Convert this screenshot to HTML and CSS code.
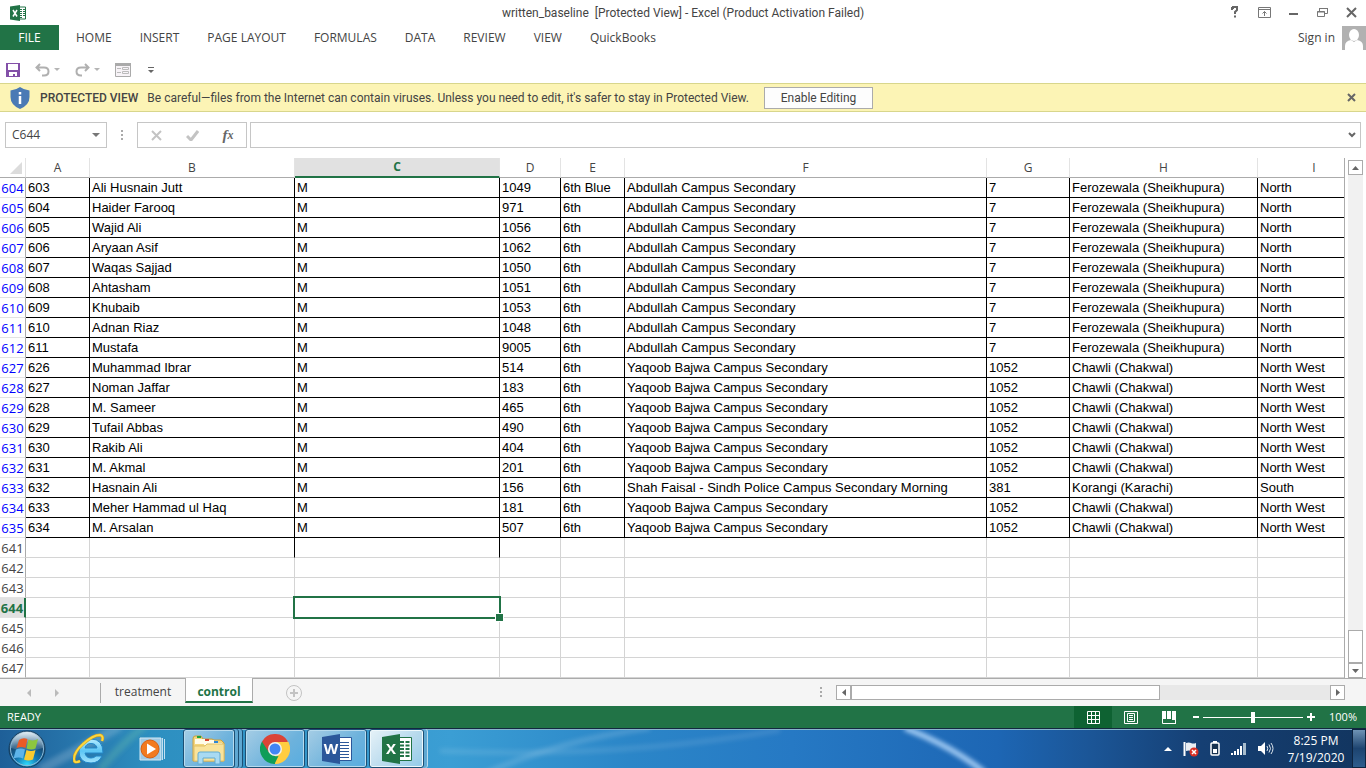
FILE: index.html
```html
<!DOCTYPE html>
<html lang="en">
<head>
    <meta charset="UTF-8">
    <meta name="viewport" content="width=device-width, initial-scale=1.0">
    <title>written_baseline [Protected View] - Excel</title>
    <link rel="stylesheet" href="styles.css">
</head>
<body>
    <!-- Title bar -->
    <header class="titlebar">
        <svg class="app-icon" width="16" height="16" viewBox="0 0 16 16">
            <path d="M9 2h6.500v12H9z" fill="#fff" stroke="#217346"/>
            <path d="M10 4.500h2M13 4.500h2M10 6.500h2M13 6.500h2M10 8.500h2M13 8.500h2M10 10.500h2M13 10.500h2M10 12.500h2" stroke="#217346"/>
            <path d="M0 1.500L10 0v16L0 14.500z" fill="#217346"/>
            <path d="M3 5l4 6.500M7 5l-4 6.500" stroke="#fff" stroke-width="1.500"/>
        </svg>
        <h1>written_baseline&nbsp; [Protected View] - Excel (Product Activation Failed)</h1>
        <div class="window-buttons">
            <button type="button" aria-label="Help">
                <svg width="13" height="13" viewBox="0 0 13 13"><path d="M3 4V2h1V1h4v3L6 6V8M6 9.500v2" fill="none" stroke="#666" stroke-width="2"/></svg>
            </button>
            <button type="button" aria-label="Ribbon display options">
                <svg width="13" height="11" viewBox="0 0 13 11"><path d="M.5.5h12v10H.5zM.5 2.500h12M6.500 9V4.500M4.500 6.500l2-2 2 2" fill="none" stroke="#777"/></svg>
            </button>
            <button type="button" aria-label="Minimize">
                <svg width="10" height="11" viewBox="0 0 10 11"><path d="M0 7h9" stroke="#666" stroke-width="2"/></svg>
            </button>
            <button type="button" aria-label="Restore">
                <svg width="11" height="11" viewBox="0 0 11 11"><path d="M.5 4.500h7v5h-7zM0 5h8M2.500 4V1.500h8v5H8M2 1.500h9" fill="none" stroke="#777"/></svg>
            </button>
            <button type="button" aria-label="Close">
                <svg width="11" height="11" viewBox="0 0 11 11"><path d="M1 1l9 9M10 1l-9 9" stroke="#666" stroke-width="2"/></svg>
            </button>
        </div>
    </header>

    <!-- Ribbon tabs -->
    <nav class="ribbon">
        <a class="file-tab" href="#">FILE</a>
        <a href="#">HOME</a>
        <a href="#">INSERT</a>
        <a href="#">PAGE LAYOUT</a>
        <a href="#">FORMULAS</a>
        <a href="#">DATA</a>
        <a href="#">REVIEW</a>
        <a href="#">VIEW</a>
        <a href="#">QuickBooks</a>
        <a class="sign-in" href="#">Sign in
            <svg width="24" height="24" viewBox="0 0 24 24"><path d="M0 0h24v24H0z" fill="#b1b1b1"/><ellipse cx="12" cy="9" rx="5" ry="6" fill="#fff"/><path d="M3 24v-4q0-5 6-6l3 2 3-2q6 1 6 6v4z" fill="#fff"/></svg>
        </a>
    </nav>

    <!-- Quick access toolbar -->
    <div class="quick-access">
        <button type="button" aria-label="Save">
            <svg width="14" height="14" viewBox="0 0 14 14"><path d="M0 0h14v14H0z" fill="#8350a8"/><path d="M2 1h10v6H2zM3 9h8v4H9v-2H7v2H3z" fill="#fff"/></svg>
        </button>
        <button type="button" class="undo" aria-label="Undo">
            <svg width="15" height="14" viewBox="0 0 15 14"><path d="M5 1L1.500 4.500 5 8M2 4.500h7q4.500 0 4.500 4T9 12.500H7" fill="none" stroke="#b0b0b0" stroke-width="2"/></svg>
            <svg width="6" height="4" viewBox="0 0 6 4"><path d="M0 0h6L3 3z" fill="#b5b5b5"/></svg>
        </button>
        <button type="button" class="redo" aria-label="Redo">
            <svg width="15" height="14" viewBox="0 0 15 14"><path d="M10 1l3.500 3.500L10 8M13 4.500H6q-4.500 0-4.500 4T6 12.500h1" fill="none" stroke="#b0b0b0" stroke-width="2"/></svg>
            <svg width="6" height="4" viewBox="0 0 6 4"><path d="M0 0h6L3 3z" fill="#b5b5b5"/></svg>
        </button>
        <button type="button" class="form" aria-label="Form">
            <svg width="16" height="14" viewBox="0 0 16 14"><path d="M.5.500h15v13H.5z" fill="#f7f3f7" stroke="#aaa"/><path d="M0 0h16v3H0z" fill="#aaa"/><path d="M2 5.500h4M2 9.500h4M7.500 4.500h6v2h-6zM7.500 8.500h6v2h-6z" fill="none" stroke="#bbb"/></svg>
        </button>
        <button type="button" class="more" aria-label="Customize Quick Access Toolbar">
            <svg width="6" height="7" viewBox="0 0 6 7"><path d="M0 .5h6" stroke="#666"/><path d="M0 3h6L3 6z" fill="#666"/></svg>
        </button>
    </div>

    <!-- Protected view message -->
    <div class="message-bar">
        <svg width="20" height="22" viewBox="0 0 20 22"><path d="M10 0q4 3 9.500 3.500V10q0 8-9.500 12Q.5 18 .5 10V3.500Q6 3 10 0z" fill="#4a7ab5"/><path d="M10 5v2.500M10 9v8" stroke="#fff" stroke-width="2.500"/></svg>
        <strong>PROTECTED VIEW</strong>
        <span class="message">Be careful—files from the Internet can contain viruses. Unless you need to edit, it's safer to stay in Protected View.</span>
        <button type="button" class="enable">Enable Editing</button>
        <button type="button" class="dismiss" aria-label="Close message">
            <svg width="9" height="9" viewBox="0 0 9 9"><path d="M1 1l7 7M8 1L1 8" stroke="#666" stroke-width="2"/></svg>
        </button>
    </div>

    <!-- Formula bar -->
    <div class="formula-bar">
        <div class="name-box">
            <input type="text" value="C644" aria-label="Name Box">
            <button type="button" aria-label="Names"><svg width="8" height="5" viewBox="0 0 8 5"><path d="M0 0h8L4 4z" fill="#777"/></svg></button>
        </div>
        <svg class="dots" width="2" height="11" viewBox="0 0 2 11"><path d="M0 0h2v2H0zM0 4h2v2H0zM0 8h2v2H0z" fill="#aaa"/></svg>
        <div class="formula-buttons">
            <button type="button" aria-label="Cancel"><svg width="11" height="11" viewBox="0 0 11 11"><path d="M1 1l9 9M10 1l-9 9" stroke="#c3c3c3" stroke-width="2"/></svg></button>
            <button type="button" aria-label="Enter"><svg width="13" height="11" viewBox="0 0 13 11"><path d="M1 6l4 4 7-9" fill="none" stroke="#c3c3c3" stroke-width="3"/></svg></button>
            <button type="button" class="fx" aria-label="Insert Function"><i>f</i><sub>x</sub></button>
        </div>
        <div class="formula-input">
            <input type="text" aria-label="Formula">
            <button type="button" aria-label="Expand formula bar"><svg width="8" height="6" viewBox="0 0 8 6"><path d="M1 1l3 3 3-3" fill="none" stroke="#666" stroke-width="2"/></svg></button>
        </div>
    </div>

    <!-- Worksheet -->
    <main class="worksheet">
        <div class="grid">
            <table>
                <colgroup>
                    <col class="col-head"><col class="col-a"><col class="col-b"><col class="col-c"><col class="col-d">
                    <col class="col-e"><col class="col-f"><col class="col-g"><col class="col-h"><col class="col-i">
                </colgroup>
                <thead>
                    <tr>
                        <th class="corner"><svg width="12" height="12" viewBox="0 0 12 12"><path d="M12 0v12H0z" fill="#dcdcdc"/></svg></th>
                        <th>A</th><th>B</th><th class="current">C</th><th>D</th><th>E</th><th>F</th><th>G</th><th>H</th><th>I</th>
                    </tr>
                </thead>
                <tbody class="data">
                    <tr><th>604</th><td>603</td><td>Ali Husnain Jutt</td><td>M</td><td>1049</td><td>6th Blue</td><td>Abdullah Campus Secondary</td><td>7</td><td>Ferozewala (Sheikhupura)</td><td>North</td></tr>
                    <tr><th>605</th><td>604</td><td>Haider Farooq</td><td>M</td><td>971</td><td>6th</td><td>Abdullah Campus Secondary</td><td>7</td><td>Ferozewala (Sheikhupura)</td><td>North</td></tr>
                    <tr><th>606</th><td>605</td><td>Wajid Ali</td><td>M</td><td>1056</td><td>6th</td><td>Abdullah Campus Secondary</td><td>7</td><td>Ferozewala (Sheikhupura)</td><td>North</td></tr>
                    <tr><th>607</th><td>606</td><td>Aryaan Asif</td><td>M</td><td>1062</td><td>6th</td><td>Abdullah Campus Secondary</td><td>7</td><td>Ferozewala (Sheikhupura)</td><td>North</td></tr>
                    <tr><th>608</th><td>607</td><td>Waqas Sajjad</td><td>M</td><td>1050</td><td>6th</td><td>Abdullah Campus Secondary</td><td>7</td><td>Ferozewala (Sheikhupura)</td><td>North</td></tr>
                    <tr><th>609</th><td>608</td><td>Ahtasham</td><td>M</td><td>1051</td><td>6th</td><td>Abdullah Campus Secondary</td><td>7</td><td>Ferozewala (Sheikhupura)</td><td>North</td></tr>
                    <tr><th>610</th><td>609</td><td>Khubaib</td><td>M</td><td>1053</td><td>6th</td><td>Abdullah Campus Secondary</td><td>7</td><td>Ferozewala (Sheikhupura)</td><td>North</td></tr>
                    <tr><th>611</th><td>610</td><td>Adnan Riaz</td><td>M</td><td>1048</td><td>6th</td><td>Abdullah Campus Secondary</td><td>7</td><td>Ferozewala (Sheikhupura)</td><td>North</td></tr>
                    <tr><th>612</th><td>611</td><td>Mustafa</td><td>M</td><td>9005</td><td>6th</td><td>Abdullah Campus Secondary</td><td>7</td><td>Ferozewala (Sheikhupura)</td><td>North</td></tr>
                    <tr><th>627</th><td>626</td><td>Muhammad Ibrar</td><td>M</td><td>514</td><td>6th</td><td>Yaqoob Bajwa Campus Secondary</td><td>1052</td><td>Chawli (Chakwal)</td><td>North West</td></tr>
                    <tr><th>628</th><td>627</td><td>Noman Jaffar</td><td>M</td><td>183</td><td>6th</td><td>Yaqoob Bajwa Campus Secondary</td><td>1052</td><td>Chawli (Chakwal)</td><td>North West</td></tr>
                    <tr><th>629</th><td>628</td><td>M. Sameer</td><td>M</td><td>465</td><td>6th</td><td>Yaqoob Bajwa Campus Secondary</td><td>1052</td><td>Chawli (Chakwal)</td><td>North West</td></tr>
                    <tr><th>630</th><td>629</td><td>Tufail Abbas</td><td>M</td><td>490</td><td>6th</td><td>Yaqoob Bajwa Campus Secondary</td><td>1052</td><td>Chawli (Chakwal)</td><td>North West</td></tr>
                    <tr><th>631</th><td>630</td><td>Rakib Ali</td><td>M</td><td>404</td><td>6th</td><td>Yaqoob Bajwa Campus Secondary</td><td>1052</td><td>Chawli (Chakwal)</td><td>North West</td></tr>
                    <tr><th>632</th><td>631</td><td>M. Akmal</td><td>M</td><td>201</td><td>6th</td><td>Yaqoob Bajwa Campus Secondary</td><td>1052</td><td>Chawli (Chakwal)</td><td>North West</td></tr>
                    <tr><th>633</th><td>632</td><td>Hasnain Ali</td><td>M</td><td>156</td><td>6th</td><td>Shah Faisal - Sindh Police Campus Secondary Morning</td><td>381</td><td>Korangi (Karachi)</td><td>South</td></tr>
                    <tr><th>634</th><td>633</td><td>Meher Hammad ul Haq</td><td>M</td><td>181</td><td>6th</td><td>Yaqoob Bajwa Campus Secondary</td><td>1052</td><td>Chawli (Chakwal)</td><td>North West</td></tr>
                    <tr><th>635</th><td>634</td><td>M. Arsalan</td><td>M</td><td>507</td><td>6th</td><td>Yaqoob Bajwa Campus Secondary</td><td>1052</td><td>Chawli (Chakwal)</td><td>North West</td></tr>
                </tbody>
                <tbody>
                    <tr><th>641</th><td></td><td class="edge"></td><td class="edge"></td><td></td><td></td><td></td><td></td><td></td><td></td></tr>
                    <tr><th>642</th><td></td><td></td><td></td><td></td><td></td><td></td><td></td><td></td><td></td></tr>
                    <tr><th>643</th><td></td><td></td><td></td><td></td><td></td><td></td><td></td><td></td><td></td></tr>
                    <tr><th class="current">644</th><td></td><td></td><td class="selected"></td><td></td><td></td><td></td><td></td><td></td><td></td></tr>
                    <tr><th>645</th><td></td><td></td><td></td><td></td><td></td><td></td><td></td><td></td><td></td></tr>
                    <tr><th>646</th><td></td><td></td><td></td><td></td><td></td><td></td><td></td><td></td><td></td></tr>
                    <tr><th>647</th><td></td><td></td><td></td><td></td><td></td><td></td><td></td><td></td><td></td></tr>
                </tbody>
            </table>
        </div>
        <div class="vscroll">
            <button type="button" aria-label="Scroll up"><svg width="7" height="4" viewBox="0 0 7 4"><path d="M0 4h7L3.500 0z" fill="#666"/></svg></button>
            <div class="track"><div class="thumb"></div></div>
            <button type="button" aria-label="Scroll down"><svg width="7" height="4" viewBox="0 0 7 4"><path d="M0 0h7L3.500 4z" fill="#666"/></svg></button>
        </div>
    </main>

    <!-- Sheet tabs -->
    <div class="sheet-bar">
        <div class="sheet-nav">
            <button type="button" aria-label="Previous sheet"><svg width="4" height="8" viewBox="0 0 4 8"><path d="M4 0v8L0 4z" fill="#bbb"/></svg></button>
            <button type="button" aria-label="Next sheet"><svg width="4" height="8" viewBox="0 0 4 8"><path d="M0 0v8l4-4z" fill="#bbb"/></svg></button>
        </div>
        <a class="sheet-tab" href="#">treatment</a>
        <a class="sheet-tab active" href="#">control</a>
        <button type="button" class="new-sheet" aria-label="New sheet">
            <svg width="16" height="16" viewBox="0 0 16 16"><circle cx="8" cy="8" r="7.500" fill="none" stroke="#c3c3c3"/><path d="M8 4v8M4 8h8" stroke="#c3c3c3" stroke-width="2"/></svg>
        </button>
        <svg class="dots splitter" width="2" height="11" viewBox="0 0 2 11"><path d="M0 0h2v2H0zM0 4h2v2H0zM0 8h2v2H0z" fill="#aaa"/></svg>
        <div class="hscroll">
            <button type="button" aria-label="Scroll left"><svg width="4" height="7" viewBox="0 0 4 7"><path d="M4 0v7L0 3.500z" fill="#666"/></svg></button>
            <div class="track"><div class="thumb"></div></div>
            <button type="button" aria-label="Scroll right"><svg width="4" height="7" viewBox="0 0 4 7"><path d="M0 0v7l4-3.500z" fill="#666"/></svg></button>
        </div>
    </div>

    <!-- Status bar -->
    <div class="status-bar">
        <span class="status">READY</span>
        <button type="button" class="view on" aria-label="Normal view"><svg width="13" height="13" viewBox="0 0 13 13"><path d="M.5.5h12v12H.5zM4.500 0v13M8.500 0v13M0 4.500h13M0 8.500h13" fill="none" stroke="#fff"/></svg></button>
        <button type="button" class="view" aria-label="Page layout view"><svg width="14" height="13" viewBox="0 0 14 13"><path d="M.5.5h13v12H.5zM3.500 2.500h7v8h-7zM5 4.500h4M5 6.500h4M5 8.500h4" fill="none" stroke="#fff"/></svg></button>
        <button type="button" class="view" aria-label="Page break view"><svg width="14" height="13" viewBox="0 0 14 13"><path d="M0 0h4v8H0zM5 0h4v8H5zM10 0h4v13h-4z" fill="#fff"/><path d="M.5 0v12.500h13V0" fill="none" stroke="#fff"/><path d="M10 9h3v3h-3z" fill="#217346"/></svg></button>
        <button type="button" class="zoom-out" aria-label="Zoom out"><svg width="6" height="8" viewBox="0 0 6 8"><path d="M0 4h6" stroke="#fff" stroke-width="2"/></svg></button>
        <input type="range" min="0" max="100" value="50" aria-label="Zoom">
        <button type="button" class="zoom-in" aria-label="Zoom in"><svg width="8" height="8" viewBox="0 0 8 8"><path d="M0 4h8M4 0v8" stroke="#fff" stroke-width="2"/></svg></button>
        <span class="zoom-level">100%</span>
    </div>

    <!-- Windows taskbar -->
    <footer class="taskbar">
        <svg class="glow" viewBox="0 0 1366 40" preserveAspectRatio="none">
            <defs><filter id="soft" x="-10%" y="-50%" width="120%" height="200%"><feGaussianBlur stdDeviation="2.500"/></filter></defs>
            <g fill="none" stroke="#fff" filter="url(#soft)">
                <path d="M40 42Q80 20 120-4" stroke-width="10" opacity=".18"/>
                <path d="M100 42Q125 10 145-4" stroke="#8fe0a0" stroke-width="8" opacity=".22"/>
                <path d="M480 48Q560 10 650-2" stroke-width="6" opacity=".14"/>
                <path d="M440 22Q620 30 780 0" stroke-width="6" opacity=".1"/>
                <path d="M905-2Q950 16 984 44" stroke="#b4d8fc" stroke-width="6" opacity=".85"/>
            </g>
        </svg>
        <button type="button" class="start" aria-label="Start">
            <svg width="38" height="38" viewBox="0 0 38 38">
                <defs>
                    <radialGradient id="orb" cx=".5" cy=".95" r=".9"><stop offset="0" stop-color="#2de0ff"/><stop offset=".35" stop-color="#1479b4"/><stop offset=".7" stop-color="#164a74"/><stop offset="1" stop-color="#a9c4d6"/></radialGradient>
                    <linearGradient id="shine" x2="0" y2="1"><stop offset="0" stop-color="#e2edf4"/><stop offset="1" stop-color="#5682a3" stop-opacity=".4"/></linearGradient>
                </defs>
                <circle cx="19" cy="19" r="18" fill="url(#orb)" stroke="#143c5c"/>
                <circle cx="19" cy="19" r="16.500" fill="none" stroke="#8db9d6"/>
                <path d="M3 18a16 16 0 0 1 32 0q-16 5-32 0z" fill="url(#shine)"/>
                <path d="M11 10q4-3 8.500-1L17.500 18q-4-2-9 0z" fill="#ea5b26"/>
                <path d="M20.500 9.500q5 2 9.500-.500l-2.500 9.500q-4 2-9 0z" fill="#8cc63f"/>
                <path d="M8 19.500q5-2 9 0L15 28.500q-4-2-9.500 0z" fill="#5db4ea"/>
                <path d="M18.500 20q4.500 2 9 0L25 29.500q-5 2-9 0z" fill="#fbcb2f"/>
            </svg>
        </button>
        <button type="button" class="pin ie" aria-label="Internet Explorer">
            <svg width="32" height="32" viewBox="0 0 32 32">
                <defs><linearGradient id="ie" x2="0" y2="1"><stop offset="0" stop-color="#b5ecff"/><stop offset=".5" stop-color="#5cc6f5"/><stop offset="1" stop-color="#a2e3fc"/></linearGradient></defs>
                <path fill-rule="evenodd" d="M30 20H12q1 5 6 5 3 0 5-2h6q-3 7-11 7Q6 30 6 18 7 6 18 6q12 0 12 14zM12 15h12q-1-4.500-6-4.500T12 15z" fill="url(#ie)" stroke="#2387c8"/>
                <path d="M7 28q-6 3-6-2Q1 19 10 11 20 2 27 2q4 1 2 6" fill="none" stroke="#d49d17" stroke-width="3"/>
                <path d="M7 28q-6 3-6-2Q1 19 10 11 20 2 27 2q4 1 2 6" fill="none" stroke="#fcd73f" stroke-width="2"/>
            </svg>
        </button>
        <button type="button" class="pin" aria-label="Media Player">
            <svg width="30" height="26" viewBox="0 0 30 26">
                <path d="M3 2h21v22H3z" fill="#9fc9e4" stroke="#d4e8f4"/><path d="M25.500 2v22M27.500 3v20" stroke="#c4e0f2"/>
                <circle cx="13" cy="13" r="9" fill="#f27a1f" stroke="#d95f10"/><path d="M10 7.500v11l9-5.500z" fill="#fff"/>
            </svg>
        </button>
        <button type="button" class="task explorer" aria-label="Windows Explorer">
            <svg width="36" height="32" viewBox="0 0 36 32">
                <path d="M2 28V6q0-3 2-3h6l2 3h9l2 1h7l3 3v18z" fill="#f3d57e" stroke="#c9a040"/>
                <path d="M4 6h12v5H4zM13 7h10v5H13zM22 10h9v4h-9z" fill="#fffbe8"/>
                <path d="M6 3h4v2H6z" fill="#1da33c"/><path d="M14 6h4v2h-4z" fill="#d8432c"/><path d="M23 8h4v2h-4z" fill="#2d87d6"/>
                <path d="M3 13h11l2-2h17v17H3z" fill="#f9e39b" stroke="#e1c066"/>
                <path d="M7 31V21q0-2 2-2h18q2 0 2 2v10h-5v-6H12v6z" fill="#a9daf2" stroke="#63abd0"/>
            </svg>
        </button>
        <button type="button" class="task" aria-label="Google Chrome">
            <svg width="30" height="30" viewBox="0 0 30 30">
                <path d="M15 15L2 7.500A15 15 0 0 1 28 7.500z" fill="#db4437"/>
                <path d="M15 15L28 7.500A15 15 0 0 1 15 30z" fill="#ffcd40"/>
                <path d="M15 15v15A15 15 0 0 1 2 7.500z" fill="#0f9d58"/>
                <path d="M15 8h13.200q3 7-1 14T15 30l6-11z" fill="#ffcd40"/><path d="M2 7.500L9 18.500 15 8z" fill="#db4437"/><path d="M9 18.500q3 5 9.500 3.500L14.500 30 6 26z" fill="#0f9d58"/>
                <circle cx="15" cy="15" r="7" fill="#f1f1f1"/><circle cx="15" cy="15" r="5.500" fill="#4285f4"/>
            </svg>
        </button>
        <button type="button" class="task" aria-label="Word">
            <svg width="30" height="30" viewBox="0 0 30 30">
                <path d="M17 3.500h12.500v23H17z" fill="#fff" stroke="#2b579a"/><path d="M18 8.500h9M18 11.500h9M18 14.500h9M18 17.500h9M18 20.500h9M18 23.500h9" stroke="#2b579a"/>
                <path d="M0 3l18-3v30L0 27z" fill="#2b579a"/><text x="9" y="20" class="letter">W</text>
            </svg>
        </button>
        <button type="button" class="task open" aria-label="Excel">
            <svg width="30" height="30" viewBox="0 0 30 30">
                <path d="M17 3.500h12.500v23H17z" fill="#fff" stroke="#217346"/><path d="M18 8h4M23.500 8h4M18 11.500h4M23.500 11.500h4M18 15h4M23.500 15h4M18 18.500h4M23.500 18.500h4M18 22h4M23.500 22h4" stroke="#217346" stroke-width="2"/>
                <path d="M0 3l18-3v30L0 27z" fill="#217346"/><text x="9" y="20" class="letter">X</text>
            </svg>
        </button>
        <div class="tray">
            <svg width="8" height="4" viewBox="0 0 8 4"><path d="M0 4h8L4 0z" fill="#fff"/></svg>
            <svg width="16" height="16" viewBox="0 0 16 16"><path d="M1.500 1v14" stroke="#fff" stroke-width="2"/><path d="M3 2q3-1 5 0t5 0v8q-3 1-5 0t-5 0z" fill="#e9eef3"/><circle cx="11" cy="11" r="4.500" fill="#d93025"/><path d="M9 9l4 4M13 9l-4 4" stroke="#fff" stroke-width="1.500"/></svg>
            <svg width="10" height="15" viewBox="0 0 10 15"><path d="M3 0h4v2H3z" fill="#fff"/><rect x="1" y="2" width="8" height="12" rx="1" fill="#16314f" stroke="#fff" stroke-width="1.500"/><path d="M3 8h4v4H3z" fill="#fff"/></svg>
            <svg width="16" height="12" viewBox="0 0 16 12"><path d="M0 10h2v2H0zM3 8h2v4H3zM6 6h2v6H6zM9 3h2v9H9z" fill="#fff"/><path d="M12 0h3v12h-3z" fill="#a8bccd"/></svg>
            <svg width="16" height="15" viewBox="0 0 16 15"><path d="M0 5h3l4-4v13l-4-4H0z" fill="#fff"/><path d="M9 5q1.500 2.500 0 5M11 3.500q3 4 0 8M13 2q4 5.500 0 11" fill="none" stroke="#dfe8f0"/></svg>
            <time class="clock" datetime="2020-07-19T20:25">8:25 PM<br>7/19/2020</time>
        </div>
        <button type="button" class="show-desktop" aria-label="Show desktop"></button>
    </footer>
</body>
</html>
```
FILE: styles.css
```css
* {
    box-sizing: border-box;
}
body {
    margin: 0;
    min-height: 100vh;
    display: flex;
    flex-direction: column;
    font-family: "Open Sans", "Noto Sans", sans-serif;
    font-size: 12px;
    line-height: 16px;
    color: #444;
    background: #fff;
    overflow-x: hidden;
}
a {
    color: inherit;
    text-decoration: none;
}
button {
    display: flex;
    align-items: center;
    justify-content: center;
    margin: 0;
    padding: 0;
    border: none;
    background: none;
    font: inherit;
    color: inherit;
}
input {
    min-width: 0;
    margin: 0;
    border: none;
    font: inherit;
    color: inherit;
}
svg {
    display: block;
    flex: none;
}

/* Title bar */
.titlebar {
    display: grid;
    grid-template-columns: 1fr auto 1fr;
    align-items: center;
    height: 25px;
}
.app-icon {
    margin-left: 10px;
}
h1 {
    margin: 0;
    font-family: Roboto, sans-serif;
    font-size: 12px;
    font-weight: normal;
}
.window-buttons {
    display: flex;
    justify-content: flex-end;
}
.window-buttons button {
    width: 29px;
    height: 22px;
}

/* Ribbon tabs */
.ribbon {
    display: flex;
    align-items: center;
    gap: 28px;
    height: 25px;
}
.ribbon .file-tab {
    width: 59px;
    margin-right: -11px;
    line-height: 25px;
    text-align: center;
    color: #fff;
    background: #217346;
}
.ribbon .sign-in {
    display: flex;
    align-items: center;
    gap: 7px;
    margin-left: auto;
}

/* Quick access toolbar */
.quick-access {
    display: flex;
    align-items: center;
    height: 33px;
    padding: 7px 6px 0;
    gap: 15px;
}
.quick-access button {
    height: 16px;
    gap: 4px;
}
.quick-access .more {
    margin-left: 2px;
}

/* Protected view message */
.message-bar {
    display: flex;
    align-items: center;
    height: 29px;
    padding: 0 10px;
    font-family: Roboto, sans-serif;
    background: #fcf4b5;
    border-top: 1px solid #d8d68c;
    border-bottom: 1px solid #d8d68c;
}
.message-bar strong {
    margin: 0 9px 0 10px;
    font-weight: 500;
}
.enable {
    width: 109px;
    height: 22px;
    margin-left: 15px;
    border: 1px solid #ababab;
    background: #fdfdfd;
}
.dismiss {
    margin-left: auto;
}

/* Formula bar */
.formula-bar {
    display: flex;
    align-items: center;
    padding: 10px 5px;
}
.name-box,
.formula-buttons,
.formula-input {
    display: flex;
    align-items: center;
    height: 26px;
    border: 1px solid #c6c6c6;
}
.name-box {
    width: 102px;
    padding: 0 6px;
}
.name-box input,
.formula-input input {
    flex: 1;
    padding: 0;
}
.dots {
    margin: 0 14px;
}
.formula-buttons {
    width: 110px;
    margin-right: 3px;
}
.formula-buttons button {
    flex: 1;
}
.fx {
    font: bold 15px/20px "Liberation Serif", serif;
    color: #666;
}
.fx sub {
    font-size: 12px;
    font-style: italic;
}
.formula-input {
    flex: 1;
    padding: 0 4px;
}

/* Worksheet */
.worksheet {
    display: flex;
    flex: 1;
}
.grid {
    flex: 1;
    min-width: 0;
    overflow: hidden;
    border-right: 1px solid #ababab;
}
table {
    width: 1371px;
    table-layout: fixed;
    border-collapse: separate;
    border-spacing: 0;
}
.col-head { width: 26px; }
.col-a { width: 64px; }
.col-b { width: 205px; }
.col-c { width: 205px; }
.col-d { width: 61px; }
.col-e { width: 64px; }
.col-f { width: 362px; }
.col-g { width: 83px; }
.col-h { width: 188px; }
.col-i { width: 113px; }
th,
td {
    height: 20px;
    padding: 0;
    white-space: nowrap;
    overflow: hidden;
}
thead th {
    font-weight: normal;
    line-height: 18px;
    border-bottom: 1px solid #ababab;
    border-right: 1px solid #e3e3e3;
}
thead .current {
    font-weight: bold;
    color: #217346;
    background: #e1e1e1;
    border-bottom: 2px solid #217346;
}
.corner svg {
    margin-left: 10px;
}
tbody th {
    font-size: 13px;
    line-height: 18px;
    font-weight: normal;
    text-align: center;
    border-right: 1px solid #ababab;
    border-bottom: 1px solid #e3e3e3;
}
tbody .current {
    font-weight: bold;
    color: #217346;
    background: #e1e1e1;
    border-right: 2px solid #217346;
}
td {
    padding-left: 2px;
    font: 13px/18px "Liberation Sans", Arial, sans-serif;
    color: #000;
    border-right: 1px solid #d4d4d4;
    border-bottom: 1px solid #d4d4d4;
}
.data th {
    color: #00f;
}
.data td {
    border-color: #000;
}
td.edge {
    border-right-color: #000;
}
.selected {
    position: relative;
    overflow: visible;
}
.selected::before {
    content: "";
    position: absolute;
    inset: -2px;
    border: 2px solid #217346;
}
.selected::after {
    content: "";
    position: absolute;
    right: -5px;
    bottom: -5px;
    width: 7px;
    height: 7px;
    background: #217346;
    border: 1px solid #fff;
}

/* Scroll bars */
.vscroll {
    display: flex;
    flex-direction: column;
    width: 15px;
    margin: 2px 3px 0;
}
.vscroll button,
.hscroll button {
    width: 15px;
    height: 15px;
    background: #fff;
    border: 1px solid #ababab;
}
.track {
    display: flex;
    flex: 1;
    background: #f1f1f1;
}
.thumb {
    background: #fff;
    border: 1px solid #ababab;
}
.vscroll .thumb {
    width: 15px;
    height: 33px;
    margin-top: auto;
}
.hscroll {
    display: flex;
    width: 509px;
    margin-right: 21px;
}
.hscroll .track {
    background: #e8e8e8;
}
.hscroll .thumb {
    width: 309px;
}

/* Sheet tabs */
.sheet-bar {
    display: flex;
    align-items: center;
    height: 28px;
    background: #f5f5f5;
    border-top: 1px solid #ababab;
}
.sheet-nav {
    display: flex;
    gap: 24px;
    width: 101px;
    height: 20px;
    padding-left: 27px;
    border-right: 1px solid #ababab;
}
.sheet-tab {
    align-self: flex-start;
    width: 84px;
    height: 24px;
    line-height: 25px;
    text-align: center;
}
.sheet-tab.active {
    width: 68px;
    margin-top: -1px;
    height: 25px;
    line-height: 27px;
    font-weight: bold;
    color: #217346;
    background: #fff;
    border: 1px solid #ababab;
    border-top: none;
    border-bottom: 2px solid #217346;
}
.new-sheet {
    margin-left: 33px;
}
.splitter {
    margin-left: auto;
}

/* Status bar */
.status-bar {
    display: flex;
    align-items: center;
    height: 22px;
    padding: 0 9px 0 7px;
    font-size: 11px;
    color: #fff;
    background: #217346;
}
.status {
    margin-right: auto;
}
.view {
    width: 38px;
    height: 22px;
}
.view.on {
    background: #0e6232;
}
.zoom-out {
    margin: 0 4px 0 5px;
}
.zoom-in {
    margin: 0 14px 0 4px;
}
input[type="range"] {
    appearance: none;
    width: 100px;
    height: 12px;
    background: linear-gradient(#fff, #fff) center / 100% 1px no-repeat;
}
input[type="range"]::-webkit-slider-thumb {
    appearance: none;
    width: 4px;
    height: 11px;
    background: #fff;
}

/* Windows taskbar */
.taskbar {
    position: relative;
    display: flex;
    align-items: center;
    height: 40px;
    color: #fff;
    background: linear-gradient(90deg, #1e5f98, #2878ae 6%, #2d8fc0 11%, #3b9ed4 33%, #2b86c8 46%, #2679c4 58%, #1d66b4 73%, #1b5596 80%, #153f73 88%, #12355f);
    border-top: 1px solid #13283f;
    box-shadow: inset 0 1px #86b4cc;
}
.glow {
    position: absolute;
    top: 1px;
    left: 0;
    width: 100%;
    height: 38px;
}
.taskbar button,
.tray {
    position: relative;
}
.start {
    width: 54px;
    height: 39px;
}
.pin {
    width: 58px;
}
.ie {
    width: 69px;
}
.taskbar .task {
    width: 60px;
    height: 39px;
    margin-right: 2px;
    border: 1px solid #1c4f74;
    border-radius: 3px;
    background: linear-gradient(135deg, #a5cde5, #6db2dc 60%, #58ade0);
    box-shadow: inset 0 0 0 1px #b7dbee;
}
.taskbar .explorer {
    width: 52px;
    margin-left: 2px;
    margin-right: 10px;
    box-shadow: inset 0 0 0 1px #b7dbee, 3px 0 #5fa8d2, 4px 0 #1c4f74, 7px 0 #5fa8d2, 8px 0 #1c4f74;
}
.taskbar .open {
    width: 55px;
    background: linear-gradient(135deg, #e6f2f8, #b4d8ec 60%, #93cbe9);
    box-shadow: inset 0 0 0 1px #eef8fc, 3px 0 #5fa8d2, 4px 0 #b7dbee;
}
.letter {
    font-size: 15px;
    font-weight: bold;
    text-anchor: middle;
    fill: #fff;
}
.tray {
    display: flex;
    align-items: center;
    gap: 11px;
    margin-left: auto;
}
.clock {
    width: 72px;
    margin-left: -5px;
    line-height: 17px;
    text-align: center;
}
.show-desktop {
    width: 14px;
    height: 39px;
    border: 1px solid #0d2440;
    background: linear-gradient(#6f93b5, #1d4470 50%, #2d5c8c);
}
```
